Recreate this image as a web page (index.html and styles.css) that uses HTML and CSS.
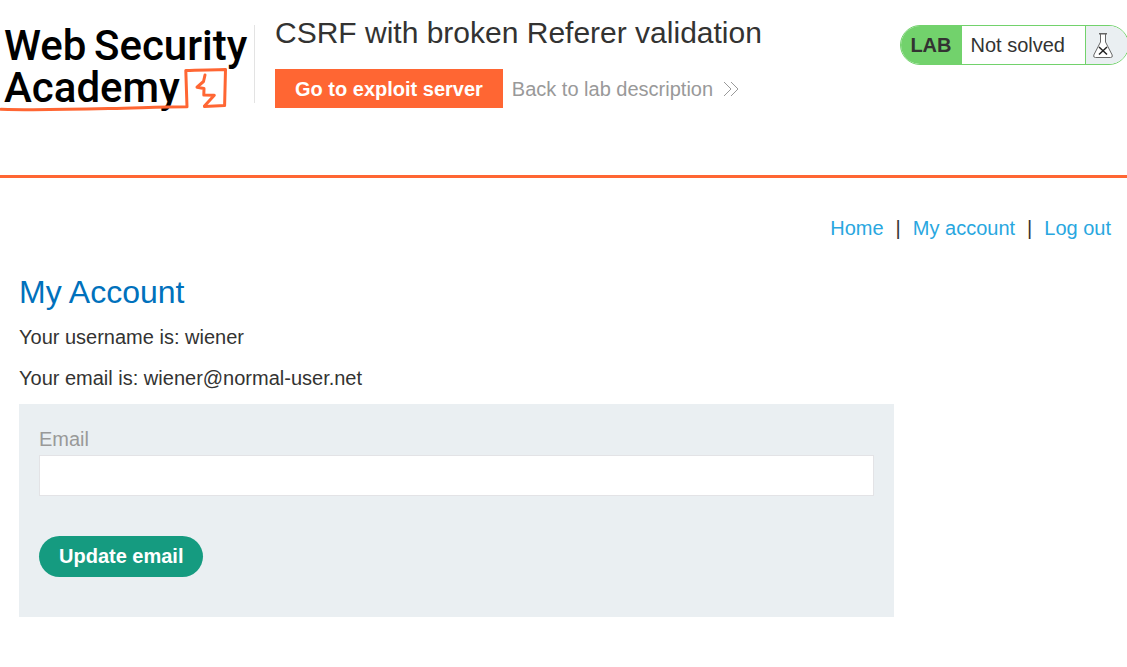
FILE: index.html
```html
<!DOCTYPE html>
<html lang="en">
<head>
<meta charset="utf-8">
<meta name="viewport" content="width=device-width, initial-scale=1">
<title>CSRF with broken Referer validation</title>
<link rel="stylesheet" href="styles.css">
</head>
<body>
<header class="lab-header">
  <a class="logo" href="#" aria-label="Web Security Academy">
    <svg class="logo-art" viewBox="0 0 254 100" width="254" height="100">
      <g class="logo-text">
        <text x="4" y="45">Web</text>
        <text x="94" y="45">Security</text>
        <text x="4" y="87">Academy</text>
      </g>
      <g fill="none" stroke="#ff6633" stroke-linejoin="round" stroke-linecap="round">
        <path stroke-width="3" d="M1 94.200C35 95.400 70 94.500 110 93.500S165 91.800 187 91.800L185.800 55.500C198 54.800 212 55 225.500 54.500L224.600 90.600L204.500 91.600"/>
        <path stroke-width="3" d="M205 60L203.500 66.500L197 72.200L204 73.400L203.800 80L214.300 80.200L204.500 91"/>
      </g>
    </svg>
  </a>
  <div class="title-block">
    <h2 class="lab-title">CSRF with broken Referer validation</h2>
    <div class="lab-actions">
      <a class="exploit-button" href="#">Go to exploit server</a>
      <a class="back-link" href="#">Back to lab description
        <svg class="chevrons" viewBox="0 0 16 16" width="16" height="16" aria-hidden="true"><path fill="none" stroke="#999" d="M1 1L8 8L1 15M8 1L15 8L8 15"/></svg>
      </a>
    </div>
  </div>
  <div class="lab-status">
    <span class="status-tag">LAB</span>
    <span class="status-text">Not solved</span>
    <span class="status-icon">
      <svg viewBox="0 0 20 26" width="20" height="26" aria-hidden="true">
        <path fill="#fff" stroke="#666" d="M7.500 2V10L.800 23Q0 25.500 2.500 25.500H17.500Q20 25.500 19.200 23L12.500 10V2"/>
        <path stroke="#666" stroke-width="1.500" d="M6 1.800H14"/>
        <path stroke="#222" stroke-width="1.500" d="M6 15L14 22.500M14 15L6 22.500"/>
      </svg>
    </span>
  </div>
</header>
<main class="content">
  <nav class="top-links">
    <a href="#">Home</a><span>|</span><a href="#">My account</a><span>|</span><a href="#">Log out</a>
  </nav>
  <h1 class="page-title">My Account</h1>
  <p class="detail">Your username is: wiener</p>
  <p class="detail">Your email is: wiener@normal-user.net</p>
  <form class="email-form">
    <label class="email-label" for="email">Email</label>
    <input class="email-input" id="email" type="email" name="email">
    <button class="update-button" type="button">Update email</button>
  </form>
</main>
</body>
</html>
```
FILE: styles.css
```css
* {
  box-sizing: border-box;
}

body {
  margin: 0;
  overflow-x: hidden;
  background: #fff;
  color: #333332;
  font-family: "Liberation Sans", Arial, sans-serif;
  font-size: 20px;
  line-height: 24px;
}

a {
  text-decoration: none;
}

.lab-header {
  display: flex;
  align-items: flex-start;
  min-height: 178px;
  border-bottom: 3px solid #ff6633;
}

.logo {
  display: flex;
  flex: none;
  height: 78px;
  margin-top: 25px;
  border-right: 1px solid #e3e3e3;
}

.logo-art {
  flex: none;
  margin-top: -10px;
}

.logo-text {
  fill: #000;
  font-family: Roboto, sans-serif;
  font-size: 42px;
  font-weight: 500;
}

.title-block {
  flex: 1;
  padding: 15px 20px 0;
}

.lab-title {
  margin: 0 0 18px;
  font-size: 30px;
  font-weight: 400;
  line-height: 36px;
}

.lab-actions {
  display: flex;
  align-items: center;
  gap: 9px;
}

.exploit-button {
  padding: 8px 20px 7px;
  background: #ff6633;
  color: #fff;
  font-weight: 700;
}

.back-link {
  display: flex;
  align-items: center;
  gap: 10px;
  color: #999;
}

.lab-status {
  display: flex;
  flex: none;
  height: 40px;
  margin: 25px -2px 0 0;
  overflow: hidden;
  border: 1px solid #72d26c;
  border-radius: 20px;
  line-height: 38px;
}

.status-tag {
  padding: 0 10px 0 9px;
  background: #72d26c;
  font-weight: 700;
}

.status-text {
  padding: 0 20px 0 9px;
}

.status-icon {
  display: flex;
  align-items: center;
  width: 43px;
  padding-left: 7px;
  border-left: 1px solid #72d26c;
  background: #eaeff2;
}

.content {
  padding: 38px 16px 50px 19px;
}

.top-links {
  display: flex;
  justify-content: flex-end;
  gap: 12px;
}

.top-links a {
  color: #29a7df;
}

.page-title {
  margin: 32px 0 13px;
  color: #0071bc;
  font-size: 32px;
  font-weight: 400;
  line-height: 40px;
}

.detail {
  margin: 0 0 17px;
}

.email-form {
  display: flex;
  flex-direction: column;
  max-width: 875px;
  margin-top: -3px;
  padding: 23px 20px 40px;
  background: #eaeff2;
}

.email-label {
  color: #999;
}

.email-input {
  height: 41px;
  margin: 4px 0 40px;
  padding: 0 10px;
  border: 1px solid #e3e3e6;
  font: inherit;
}

.update-button {
  align-self: flex-start;
  height: 41px;
  padding: 0 20px 1px;
  border: 0;
  border-radius: 21px;
  background: #159b80;
  color: #fff;
  font: inherit;
  font-weight: 700;
}
```
